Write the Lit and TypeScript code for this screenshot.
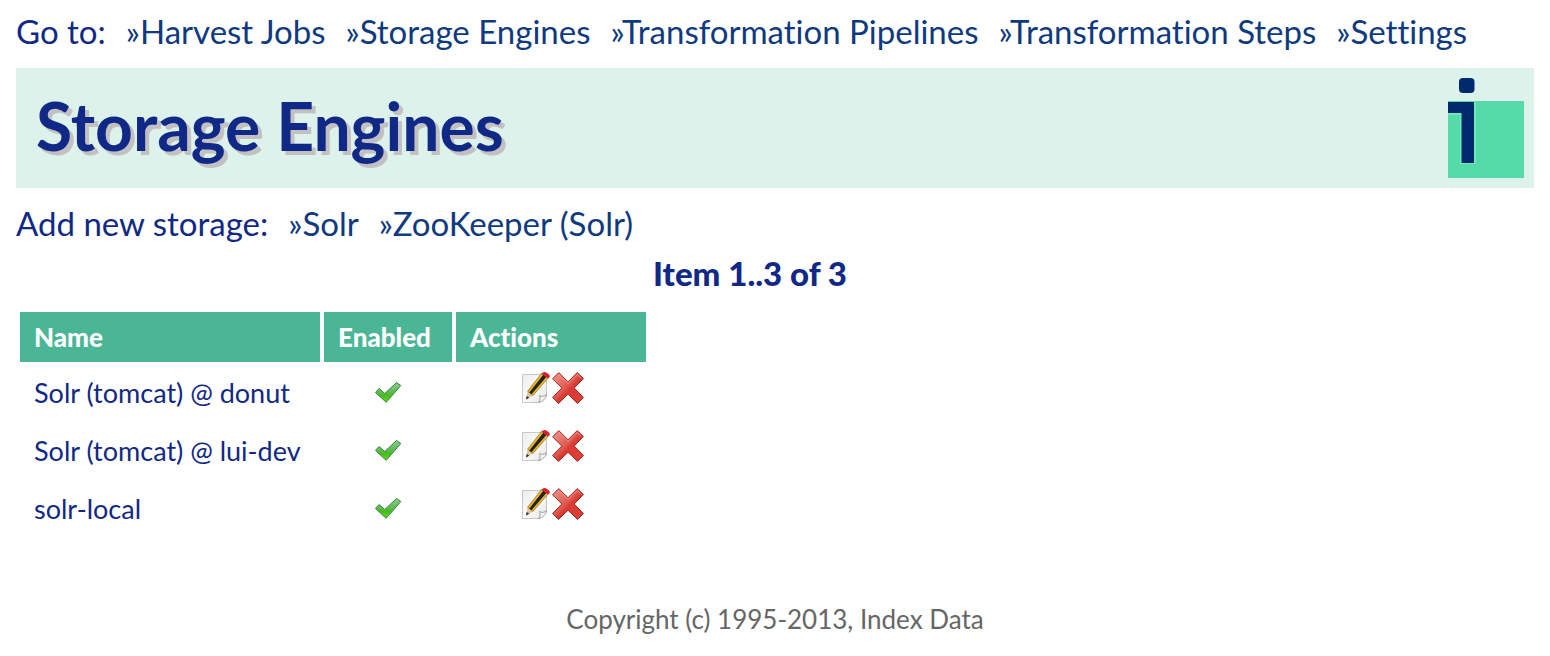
import { LitElement, html, css, svg } from "lit";
import { customElement, state } from "lit/decorators.js";

interface StorageEngine {
  name: string;
  enabled: boolean;
}

const logo = html`<svg class="logo" viewBox="0 0 76 100" role="img" aria-label="Index Data">
  <rect y="23" width="76" height="77" fill="#55daaa" />
  <path d="M0 24H28V86H12V37H0Z" fill="#70e8bd" />
  <path d="M0 24H26V85H13.500V35H0Z" fill="#002a6c" />
  <rect x="11" y="0" width="15.500" height="15" rx="4" fill="#002a6c" />
</svg>`;

const gradients = svg`<defs>
  <linearGradient id="tick" x1="0" y1="0" x2="0" y2="1">
    <stop offset="0" stop-color="#86cf86" />
    <stop offset=".5" stop-color="#5dbb52" />
    <stop offset=".65" stop-color="#44bd18" />
    <stop offset="1" stop-color="#5fd82a" />
  </linearGradient>
  <linearGradient id="cross" x1="0" y1="0" x2="1" y2="1">
    <stop offset="0" stop-color="#ee9a90" />
    <stop offset=".45" stop-color="#e05a50" />
    <stop offset=".55" stop-color="#d93a33" />
    <stop offset="1" stop-color="#e23d38" />
  </linearGradient>
  <linearGradient id="sheet" x1="0" y1="0" x2="1" y2="1">
    <stop offset="0" stop-color="#ececec" />
    <stop offset=".5" stop-color="#fbfbfb" />
    <stop offset="1" stop-color="#e2e2e2" />
  </linearGradient>
</defs>`;

const tickIcon = html`<svg class="tick" viewBox="0 0 28 24" role="img" aria-label="Enabled">
  ${gradients}
  <path d="M1.500 11.500L5 7.500L10.800 12.500L22.500 1.500L26.800 4.500L12.200 21.300Z"
    fill="url(#tick)" stroke="#3c8040" stroke-width="1" stroke-linejoin="round" />
</svg>`;

const editIcon = html`<svg class="icon" viewBox="0 0 32 32" aria-hidden="true">
  ${gradients}
  <path d="M2.500 2.500H26.500V24L20 30.500H2.500Z" fill="url(#sheet)" stroke="#c8c8c8" />
  <path d="M18.500 30.500C20.500 28 20.500 26 19.500 23.500C22 25 24.500 24.500 26.500 22.500C26 27 22.500 29.500 18.500 30.500Z"
    fill="#f4f4f4" stroke="#a2a2a2" />
  <path d="M6 27.500L7.600 19.200L13 23.400Z" fill="#e3c395" />
  <path d="M6 27.500L6.700 23.900L9.200 25.800Z" fill="#252525" />
  <path d="M7.600 19.200L21.500 1.500L28 6L13 23.400Z" fill="#f0b822" stroke="#6a5518" stroke-width=".6" />
  <path d="M9.300 20.500L23.300 2.800L26.300 4.900L11.500 22.200Z" fill="#222" />
  <path d="M21.500 1.500L23 .4Q25 -.4 27 1L29 2.600Q30.300 4 29.300 5.500L28 6.500Z" fill="#dd1f2c" />
</svg>`;

const deleteIcon = html`<svg class="icon" viewBox="0 0 32 32" aria-hidden="true">
  ${gradients}
  <path d="M6.800 .6L16 9.800L25.200 .6L31.400 6.500L22.200 16L31.400 25.500L25.500 31.400L16 22.200L6.500 31.400L.6 25.500L9.800 16L.6 6.800Z"
    fill="url(#cross)" stroke="#9c2522" stroke-width="1" stroke-linejoin="round" />
  <path d="M6.800 2.400L16 11.500L25.200 2.400L29.500 6.500" fill="none" stroke="#f0a29a" stroke-width=".9" opacity=".8" />
</svg>`;

@customElement("app-root")
export class AppRoot extends LitElement {
  static styles = css`
    :host {
      display: block;
      box-sizing: border-box;
      padding: 12px 16px;
      background: #fff;
      color: #112986;
      font: 33px/38px Lato, "Trebuchet MS", "Open Sans", sans-serif;
      font-variant-ligatures: none;
    }
    a {
      color: #0f3a80;
      text-decoration: none;
    }
    .links {
      display: flex;
      flex-wrap: wrap;
      column-gap: 20px;
    }
    .banner {
      display: flex;
      align-items: center;
      justify-content: space-between;
      margin: 18px 0 16px;
      padding: 10px 10px 10px 20px;
      background: #dcf2ea;
    }
    .title {
      margin: 0;
      padding-bottom: 4px;
      font-size: 66px;
      line-height: 76px;
      font-weight: 700;
      text-shadow: 4px 4px 0 #c2c0c2;
    }
    .logo {
      display: block;
      width: 76px;
      height: 100px;
    }
    .count {
      margin: 12px 50px 0 0;
      text-align: center;
      font-weight: 900;
    }
    .engines {
      margin-top: 16px;
      border-spacing: 4px;
      font-size: 27px;
      line-height: 30px;
    }
    th {
      padding: 10px 14px;
      background: #4bb696;
      color: #fff;
      text-align: left;
      font-size: 26px;
      font-weight: 900;
    }
    td {
      height: 54px;
      box-sizing: border-box;
      padding: 0 14px;
    }
    .name {
      width: 272px;
    }
    .enabled {
      width: 100px;
    }
    .actions {
      width: 162px;
    }
    .tick {
      display: block;
      width: 28px;
      height: 24px;
      margin: 0 auto;
    }
    .tools {
      display: flex;
      justify-content: center;
      padding: 0 0 10px 2px;
    }
    .tool {
      padding: 0;
      border: 0;
      background: none;
      cursor: pointer;
    }
    .icon {
      display: block;
      width: 32px;
      height: 32px;
    }
    .footer {
      margin-top: 64px;
      color: #666;
      text-align: center;
      font-size: 26px;
      line-height: 30px;
    }
  `;

  @state() private engines: StorageEngine[] = [
    { name: "Solr (tomcat) @ donut", enabled: true },
    { name: "Solr (tomcat) @ lui-dev", enabled: true },
    { name: "solr-local", enabled: true },
  ];

  private pages = ["Harvest Jobs", "Storage Engines", "Transformation Pipelines", "Transformation Steps", "Settings"];
  private kinds = ["Solr", "ZooKeeper (Solr)"];

  private renderLinks(labels: string[]) {
    return labels.map((label) => html`<a href="#">»${label}</a>`);
  }

  render() {
    const total = this.engines.length;
    return html`
      <nav class="links"><span>Go to:</span>${this.renderLinks(this.pages)}</nav>
      <header class="banner">
        <h1 class="title">Storage Engines</h1>
        ${logo}
      </header>
      <main>
        <div class="links"><span>Add new storage:</span>${this.renderLinks(this.kinds)}</div>
        <div class="count">Item 1..${total} of ${total}</div>
        <table class="engines">
          <thead>
            <tr>
              <th class="name" scope="col">Name</th>
              <th class="enabled" scope="col">Enabled</th>
              <th class="actions" scope="col">Actions</th>
            </tr>
          </thead>
          <tbody>
            ${this.engines.map(
              (engine) => html`<tr>
                <td>${engine.name}</td>
                <td>${engine.enabled ? tickIcon : ""}</td>
                <td>
                  <div class="tools">
                    <button class="tool" type="button" aria-label="Edit ${engine.name}">${editIcon}</button>
                    <button class="tool" type="button" aria-label="Delete ${engine.name}">${deleteIcon}</button>
                  </div>
                </td>
              </tr>`
            )}
          </tbody>
        </table>
      </main>
      <footer class="footer">Copyright (c) 1995-2013, Index Data</footer>
    `;
  }
}
